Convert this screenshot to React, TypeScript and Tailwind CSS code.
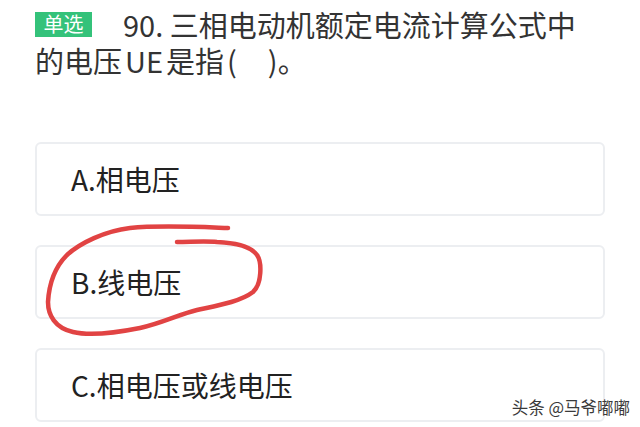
import React from "react";

const options = ["A.相电压", "B.线电压", "C.相电压或线电压"];

export default function App() {
  return (
    <div
      className="relative w-[640px] h-[427px] overflow-hidden bg-white px-[35px] pt-[6px]"
      style={{ fontFamily: '"Noto Sans CJK SC", "Noto Sans", sans-serif' }}
    >
      {/* Question */}
      <div className="text-[29px] leading-[36px] text-[#333]">
        <div className="flex items-center">
          <span className="mr-[31px] flex h-[25px] w-[57px] items-center justify-center bg-[#34c27a] text-[20px] leading-none text-white">
            单选
          </span>
          <span>90. 三相电动机额定电流计算公式中</span>
        </div>
        <div>
          的电压<span className="mx-[3px]">UE</span>是指
          <span className="ml-[3px]">(</span>
          <span className="inline-block w-[31px]" />)。
        </div>
      </div>

      {/* Options */}
      <div className="mt-[64px] flex flex-col gap-[29px]">
        {options.map((o) => (
          <div
            key={o}
            className="flex h-[74px] items-center rounded-md border-2 border-[#eceef1] pl-[34px] text-[28px] text-[#222]"
          >
            {o}
          </div>
        ))}
      </div>

      {/* Hand-drawn circle over option B */}
      <svg
        className="pointer-events-none absolute left-0 top-0"
        width="640"
        height="427"
        viewBox="0 0 640 427"
        fill="none"
      >
        <path
          d="M228,228 C200,227 160,225 130,228 C105,231 80,243 67,255 C55,267 49,285 48,302 C48,315 55,328 73,332 C90,336 115,333 140,328 C160,324 180,314 197,310 C215,306 240,302 253,292 C262,284 262,262 257,255 C252,248 240,243 217,242 C205,241 190,242 177,242"
          stroke="#e14343"
          strokeWidth="4.5"
          strokeLinecap="round"
          strokeLinejoin="round"
        />
      </svg>

      {/* Watermark */}
      <div className="absolute bottom-[12px] right-[10px] text-[16.5px] leading-none text-[#3a3a3a] [text-shadow:0_0_2px_#fff,0_0_1px_#fff]">
        头条 @马爷嘟嘟
      </div>
    </div>
  );
}
